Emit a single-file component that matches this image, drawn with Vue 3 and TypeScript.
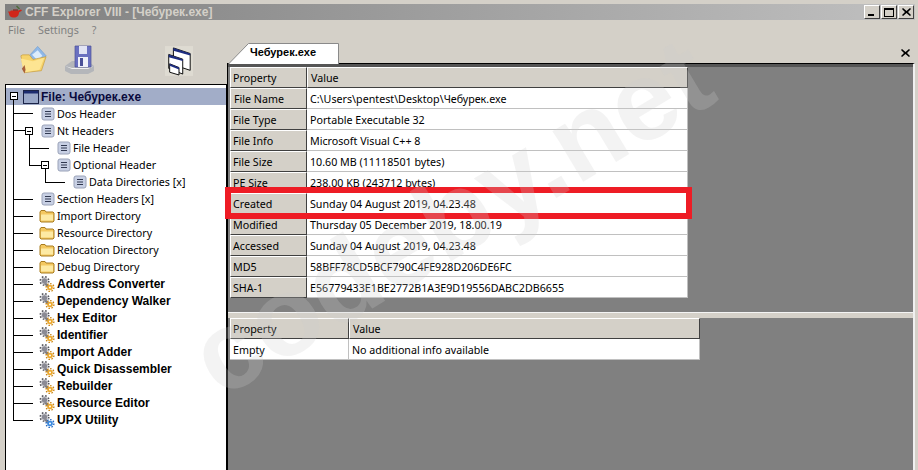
<script setup lang="ts">
interface Node { label: string; depth: number; icon: 'doc' | 'folder' | 'tool' | 'upx'; bold?: boolean }
const nodes: Node[] = [
  { label: 'Dos Header', depth: 0, icon: 'doc' },
  { label: 'Nt Headers', depth: 0, icon: 'doc' },
  { label: 'File Header', depth: 1, icon: 'doc' },
  { label: 'Optional Header', depth: 1, icon: 'doc' },
  { label: 'Data Directories [x]', depth: 2, icon: 'doc' },
  { label: 'Section Headers [x]', depth: 0, icon: 'doc' },
  { label: 'Import Directory', depth: 0, icon: 'folder' },
  { label: 'Resource Directory', depth: 0, icon: 'folder' },
  { label: 'Relocation Directory', depth: 0, icon: 'folder' },
  { label: 'Debug Directory', depth: 0, icon: 'folder' },
  { label: 'Address Converter', depth: 0, icon: 'tool', bold: true },
  { label: 'Dependency Walker', depth: 0, icon: 'tool', bold: true },
  { label: 'Hex Editor', depth: 0, icon: 'tool', bold: true },
  { label: 'Identifier', depth: 0, icon: 'tool', bold: true },
  { label: 'Import Adder', depth: 0, icon: 'tool', bold: true },
  { label: 'Quick Disassembler', depth: 0, icon: 'tool', bold: true },
  { label: 'Rebuilder', depth: 0, icon: 'tool', bold: true },
  { label: 'Resource Editor', depth: 0, icon: 'tool', bold: true },
  { label: 'UPX Utility', depth: 0, icon: 'upx', bold: true },
]
const rows: [string, string][] = [
  ['File Name', 'C:\\Users\\pentest\\Desktop\\Чебурек.exe'],
  ['File Type', 'Portable Executable 32'],
  ['File Info', 'Microsoft Visual C++ 8'],
  ['File Size', '10.60 MB (11118501 bytes)'],
  ['PE Size', '238.00 KB (243712 bytes)'],
  ['Created', 'Sunday 04 August 2019, 04.23.48'],
  ['Modified', 'Thursday 05 December 2019, 18.00.19'],
  ['Accessed', 'Sunday 04 August 2019, 04.23.48'],
  ['MD5', '58BFF78CD5BCF790C4FE928D206DE6FC'],
  ['SHA-1', 'E56779433E1BE2772B1A3E9D19556DABC2DB6655'],
]
const hLines = [113, 199, 216, 233, 250, 267, 284, 301, 318, 335, 352, 369, 386, 403, 420]
</script>

<template>
  <div class="window">
    <header class="title">
      <svg class="app-icon" width="16" height="14" viewBox="0 0 16 14">
        <path d="M1 6.500h2l1-1h7l3-1 1 1-3 2c0 3-2 5-5 5H6C3 12.500 2 9.500 2 8.500z" fill="#d0261a" />
        <path d="M10 0.500l3 3-1 1-3-3z" fill="#4e6a3a" />
        <path d="M6 4.500h5v1H6z" fill="#7a1a10" />
      </svg>
      <span class="title-text">CFF Explorer VIII - [Чебурек.exe]</span>
      <div class="caption">
        <span class="cap-btn"><i class="min"></i></span>
        <span class="cap-btn"><i class="max"></i></span>
        <span class="cap-btn"><svg width="9" height="8" viewBox="0 0 9 8"><path d="M1 0l3.500 3L8 0l1 1-3 3 3 3-1 1-3.500-3L1 8 0 7l3-3-3-3z" fill="#000" /></svg></span>
      </div>
    </header>
    <nav class="menu"><span>File</span><span>Settings</span><span>?</span></nav>
    <div class="main">
      <aside class="left">
        <div class="toolbar">
          <svg class="tb-open" width="28" height="29" viewBox="0 0 30 30">
            <path d="M10 12L20 1l9 10-9 10z" fill="#8fb8e8" stroke="#6f9ccf" stroke-width=".7" />
            <path d="M14 10l6-5 5 6-5 5z" fill="#dcecfb" />
            <path d="M2 11l2-1h7l4 5 14-3-5 15-18 2z" fill="#f6d36c" stroke="#c49a3a" stroke-width=".7" />
            <path d="M2 14l13 3 12-4-5 13-17 3z" fill="#fde592" />
            <path d="M3 25l3-4 1 5-1 4z" fill="#a8603a" />
          </svg>
          <svg class="tb-save" width="30" height="30" viewBox="0 0 30 30">
            <path d="M0 21l7-5h16l6 5v5l-6 3H6l-6-3z" fill="#b4b6ba" />
            <path d="M0 21l7 3h16l6-3-6 2H7z" fill="#f0f0f0" />
            <path d="M10 1h16v21H10z" fill="#6a70c0" stroke="#4a5098" stroke-width=".7" />
            <path d="M14 1h8v8h-8z" fill="#e2e4f4" />
            <path d="M13 12h10v10H13z" fill="#eef0fa" />
            <path d="M15 13h3v8h-3z" fill="#4a5098" />
          </svg>
          <svg class="tb-windows" width="28" height="32" viewBox="0 0 30 32">
            <rect width="30" height="32" fill="#dedbd2" />
            <path d="M9 2l18 6v18L9 20z" fill="#fff" stroke="#000" />
            <path d="M9 2l18 6v2L9 5z" fill="#1c2c80" />
            <path d="M4 9l15 5v16L4 24z" fill="#fff" stroke="#000" />
            <path d="M4 9l15 5v2L4 12z" fill="#1c2c80" />
            <path d="M5 19l10 4v8L5 28z" fill="#fff" stroke="#000" />
            <path d="M5 19l10 4v2L5 21z" fill="#1c2c80" />
          </svg>
        </div>
        <div class="tree">
          <div class="root">
            <svg class="root-icon" width="16" height="14" viewBox="0 0 16 14">
              <rect x=".5" y=".5" width="15" height="13" fill="#9aa8c8" stroke="#1c2448" />
              <rect x="1" y="1" width="14" height="2.500" fill="#1c2c70" />
            </svg>
            <span>File: Чебурек.exe</span>
          </div>
          <div v-for="n in nodes" :key="n.label" class="node" :class="[`d${n.depth}`, { bold: n.bold }]">
            <svg v-if="n.icon === 'doc'" class="ic" width="14" height="14" viewBox="0 0 14 14">
              <rect x="1" y="1" width="12" height="12" rx="2" fill="#c8d0e4" stroke="#9aa2b8" />
              <path d="M4 4.500h6M4 7h6M4 9.500h6" stroke="#303850" stroke-width="1" />
            </svg>
            <svg v-else-if="n.icon === 'folder'" class="ic-w" width="16" height="14" viewBox="0 0 16 14">
              <path d="M1 3l1-1.500h4L7 3h7l1 1v8l-1 1H2l-1-1z" fill="#f4c860" stroke="#a87c20" />
              <path d="M2 5.500h12v6H2z" fill="#fdeaa4" />
            </svg>
            <svg v-else class="ic-w" width="16" height="16" viewBox="0 0 16 16">
              <circle cx="5.500" cy="5" r="3.200" fill="#8a8a94" stroke="#d0d0d4" stroke-width="1" />
              <circle cx="5.500" cy="5" r="4.300" fill="none" stroke="#55555c" stroke-width="1.500" stroke-dasharray="1.600 1.800" />
              <path d="M7 7l4 3-2 2-4-4z" fill="#7c7c84" />
              <circle cx="11" cy="11.500" r="2.800" :fill="n.icon === 'upx' ? '#3a8ae0' : '#eda92c'" />
              <circle cx="11" cy="11.500" r="3.900" fill="none" :stroke="n.icon === 'upx' ? '#2468c0' : '#c98414'" stroke-width="1.400" stroke-dasharray="1.500 1.500" />
              <circle cx="11" cy="11.500" r="1" fill="#fff" />
            </svg>
            <span>{{ n.label }}</span>
          </div>
          <svg class="connectors" width="220" height="386" viewBox="5 84 220 386">
            <g fill="none" stroke="#000" stroke-width="1" shape-rendering="crispEdges">
              <path d="M13.500 100V420" />
              <path v-for="y in hLines" :key="y" :d="`M13 ${y + 0.5}H33`" />
              <path d="M13 130.500H25M29.500 135V165.500H41M29 148.500H49M45.500 169V182.500H65" />
              <rect x="10.500" y="92.500" width="7" height="7" fill="#fff" />
              <path d="M12 96.500h4" />
              <rect x="25.500" y="127.500" width="7" height="7" fill="#fff" />
              <path d="M27 131.500h4" />
              <rect x="41.500" y="161.500" width="7" height="7" fill="#fff" />
              <path d="M43 165.500h4" />
            </g>
          </svg>
        </div>
      </aside>
      <section class="right">
        <div class="tabs">
          <div class="tab">
            <svg class="tab-shape" width="111" height="21" viewBox="0 0 111 21">
              <path d="M0.500 21L20.500 .5H110.500V21" fill="#fff" stroke="#8a8a8a" />
            </svg>
            <span class="tab-label">Чебурек.exe</span>
          </div>
          <svg class="tab-close" width="9" height="8" viewBox="0 0 9 8"><path d="M1 0l3.500 3L8 0l1 1-3 3 3 3-1 1-3.500-3L1 8 0 7l3-3-3-3z" fill="#000" /></svg>
        </div>
        <div class="panel">
          <div class="pane top-pane">
            <div class="grid grid-a">
              <div class="cell head prop">Property</div><div class="cell head">Value</div>
              <template v-for="r in rows" :key="r[0]">
                <div class="cell head prop">{{ r[0] }}</div><div class="cell val">{{ r[1] }}</div>
              </template>
            </div>
          </div>
          <div class="splitter"></div>
          <div class="pane low-pane">
            <div class="grid grid-b">
              <div class="cell head prop">Property</div><div class="cell head">Value</div>
              <div class="cell val">Empty</div><div class="cell val">No additional info available</div>
            </div>
          </div>
        </div>
      </section>
    </div>
    <div class="highlight"></div>
    <div class="watermark">codeby.net</div>
  </div>
</template>

<style>
html, body { margin: 0; overflow: hidden; }
</style>

<style scoped>
.window {
  position: relative; width: 918px; height: 470px; overflow: hidden;
  background: #d4d0c8; box-sizing: border-box; padding: 4px 0 0 0;
  font: 10.7px "Noto Sans", "Liberation Sans", sans-serif; color: #000;
  display: flex; flex-direction: column;
}
.title {
  height: 16px; margin: 0 3px 0 5px; flex: none; display: flex; align-items: center;
  background: linear-gradient(90deg, #808080, #c0c0c0); padding-left: 2px;
}
.app-icon { flex: none; }
.title-text { margin-left: 2px; font: 700 12px "Liberation Sans", sans-serif; color: #d4d0c8; }
.caption { margin-left: auto; display: flex; gap: 1px; margin-right: 1px; }
.cap-btn {
  width: 16px; height: 14px; box-sizing: border-box; background: #d4d0c8; display: flex; align-items: center; justify-content: center;
  border: 1px solid; border-color: #fff #404040 #404040 #fff;
}
.min { display: block; width: 6px; height: 2px; background: #000; margin-top: 6px; margin-right: 2px; }
.max { display: block; width: 8px; height: 6px; border: 1px solid #000; border-top-width: 2px; }
.menu { height: 20px; flex: none; display: flex; align-items: center; padding-left: 8px; gap: 13px; color: #808080; }
.main { flex: 1; display: flex; min-height: 0; }
.left { width: 227px; flex: none; display: flex; flex-direction: column; padding-left: 5px; box-sizing: border-box; }
.toolbar { height: 44px; flex: none; display: flex; align-items: flex-start; padding-top: 5px; box-sizing: border-box; }
.tb-open { margin-left: 14px; }
.tb-save { margin-left: 18px; }
.tb-windows { margin-left: 70px; }
.tree {
  position: relative; flex: 1; background: #fff; border: 1px solid #000; border-width: 1px 1px 0 1px;
  padding-top: 3px; box-sizing: border-box;
}
.connectors { position: absolute; left: -1px; top: -1px; }
.root { height: 17px; background: #a2adc8; display: flex; align-items: center; font: 700 12px "Liberation Sans", sans-serif; color: #0a0a3c; padding-left: 17px; }
.root-icon { flex: none; margin-right: 2px; }
.node { height: 17px; display: flex; align-items: center; white-space: nowrap; }
.node.bold { font: 700 12px "Liberation Sans", sans-serif; }
.node.d0 { padding-left: 33px; }
.node.d1 { padding-left: 49px; }
.node.d2 { padding-left: 65px; }
.ic { flex: none; margin-left: 2px; margin-right: 2px; }
.ic-w { flex: none; margin-right: 2px; }
.right { flex: 1; display: flex; flex-direction: column; min-width: 0; }
.tabs { height: 23px; flex: none; position: relative; margin-left: 1px; }
.tab { position: absolute; left: 0; bottom: -1px; width: 111px; height: 21px; z-index: 1; }
.tab-shape { position: absolute; left: 0; top: 0; }
.tab-label { position: absolute; left: 22px; top: 3px; font: 700 11px "Liberation Sans", sans-serif; white-space: nowrap; }
.tab-close { position: absolute; right: 8px; top: 9px; }
.panel {
  flex: 1; margin: 0 3px 0 0; background: #808080; border: 0 solid #000; border-width: 1px 2px 0 1px; border-right-color: #f0f0f0;
  display: flex; flex-direction: column; min-height: 0; box-shadow: inset 0 3px 0 #555;
}
.pane { padding: 3px 0 0 2px; }
.top-pane { height: 248px; flex: none; box-sizing: border-box; }
.splitter { height: 6px; background: #d4d0c8; border-top: 1px solid #f4f4f4; box-sizing: border-box; flex: none; }
.low-pane { padding-top: 0; }
.grid { display: grid; grid-auto-rows: 21px; background: #fff; }
.grid-a { width: 458px; grid-template-columns: 77px 1fr; }
.grid-b { width: 470px; grid-template-columns: 119px 1fr; }
.cell { box-sizing: border-box; padding: 2px 0 0 2px; display: flex; align-items: center; white-space: nowrap; line-height: 1; }
.head { background: #d4d0c8; border: 1px solid; border-color: #fff #404040 #404040 #fff; }
.val { background: #fff; border-bottom: 1px solid #c0c0c0; border-right: 1px solid #c0c0c0; padding-left: 3px; }
.grid .head + .head { padding-left: 3px; }
.highlight { position: absolute; left: 225px; top: 187px; width: 467px; height: 32px; box-sizing: border-box; border: 6px solid #ee1c25; }
.watermark {
  position: absolute; left: 230px; top: 303px; font: 700 112px/1 "Liberation Sans", sans-serif; color: rgba(206, 206, 206, .24);
  transform-origin: 0 100%; transform: rotate(-31deg); white-space: nowrap; pointer-events: none;
}
</style>
